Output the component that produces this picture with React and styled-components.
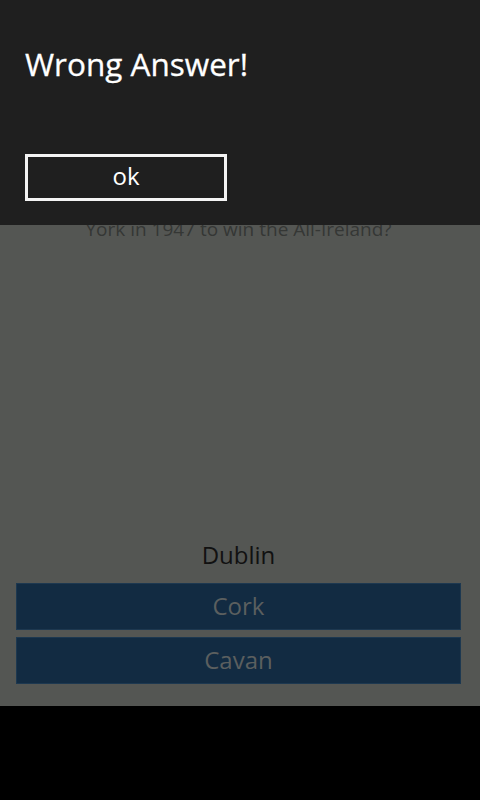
import React from "react";
import styled, { createGlobalStyle } from "styled-components";

const Global = createGlobalStyle`
  html, body { margin: 0; padding: 0; background: #000; }
  body { font-family: "Open Sans", "Noto Sans", sans-serif; }
`;

const Screen = styled.div`
  position: relative;
  width: 480px;
  height: 800px;
  background: #000;
  overflow: hidden;
`;

const Page = styled.div`
  height: 706px;
  background: #545653;
  display: flex;
  flex-direction: column;
  box-sizing: border-box;
  padding: 0 19px 22px 16px;
`;

const Question = styled.p`
  margin: 0;
  padding-top: 214px;
  text-align: center;
  font-size: 19px;
  line-height: 30px;
  color: #353735;
  flex: 1;
`;

const Answers = styled.div`
  display: flex;
  flex-direction: column;
  gap: 7px;
`;

const Plain = styled.div`
  text-align: center;
  font-size: 24px;
  color: #111;
  height: 40px;
  line-height: 40px;
  margin-bottom: 1px;
`;

const Choice = styled.button`
  height: 47px;
  width: 100%;
  border: 1px solid #1d3850;
  background: #122b42;
  color: #5b5f5f;
  font-family: inherit;
  font-size: 24px;
  padding: 0 0 2px;
  margin: 0;
`;

const Dialog = styled.div`
  position: absolute;
  top: 0;
  left: 0;
  right: 0;
  height: 225px;
  background: #1f1f1f;
  box-sizing: border-box;
  padding: 43px 24px 0 25px;
  display: flex;
  flex-direction: column;
`;

const Title = styled.h1`
  margin: 0;
  font-size: 31.5px;
  font-weight: 400;
  line-height: 42px;
  color: #fff;
  -webkit-text-stroke: 0.3px #fff;
`;

const OkButton = styled.button`
  margin-top: 69px;
  width: 202px;
  height: 47px;
  box-sizing: border-box;
  background: transparent;
  border: 3px solid #f4f4f4;
  color: #fff;
  font-family: inherit;
  font-size: 24px;
  padding: 0 0 4px;
`;

export default function App() {
  return (
    <>
      <Global />
      <Screen>
        <Page>
          <Question>York in 1947 to win the All-Ireland?</Question>
          <Answers>
            <Plain>Dublin</Plain>
            <Choice>Cork</Choice>
            <Choice>Cavan</Choice>
          </Answers>
        </Page>
        <Dialog>
          <Title>Wrong Answer!</Title>
          <OkButton>ok</OkButton>
        </Dialog>
      </Screen>
    </>
  );
}
